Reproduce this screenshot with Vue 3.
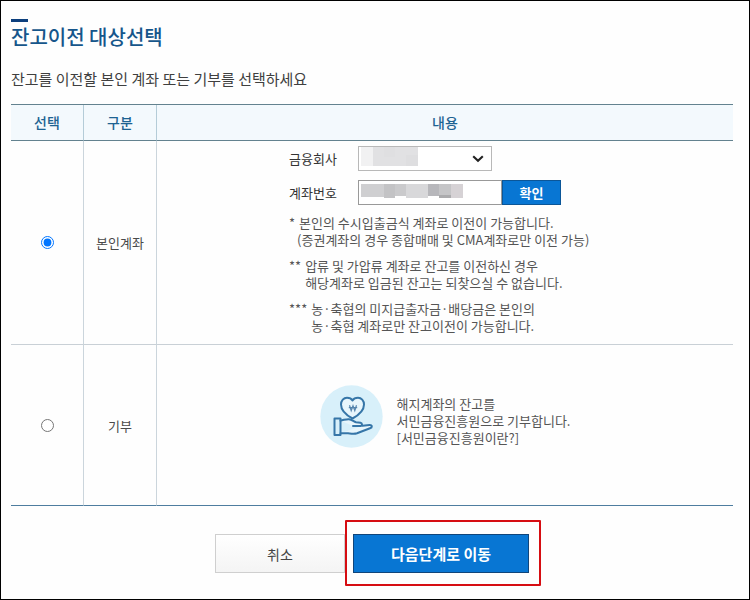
<script setup>
import { ref } from 'vue'

const target = ref('own')
const bank = ref('')
const account = ref('')

const notes = [
  { mark: '*', lines: ['본인의 수시입출금식 계좌로 이전이 가능합니다.', '(증권계좌의 경우 종합매매 및 CMA계좌로만 이전 가능)'] },
  { mark: '**', lines: ['압류 및 가압류 계좌로 잔고를 이전하신 경우', '해당계좌로 입금된 잔고는 되찾으실 수 없습니다.'] },
  { mark: '***', lines: ['농·축협의 미지급출자금·배당금은 본인의', '농·축협 계좌로만 잔고이전이 가능합니다.'] },
]
</script>

<template>
  <main class="page">
    <h1 class="title">잔고이전 대상선택</h1>
    <p class="lead">잔고를 이전할 본인 계좌 또는 기부를 선택하세요</p>

    <table class="choices">
      <colgroup>
        <col class="col-narrow" />
        <col class="col-narrow" />
        <col />
      </colgroup>
      <thead>
        <tr>
          <th scope="col">선택</th>
          <th scope="col">구분</th>
          <th scope="col">내용</th>
        </tr>
      </thead>
      <tbody>
        <tr>
          <td><input id="target-own" v-model="target" class="radio" type="radio" name="target" value="own" /></td>
          <td><label for="target-own">본인계좌</label></td>
          <td class="content">
            <div class="account">
              <div class="field">
                <label class="field-label" for="bank">금융회사</label>
                <div class="control select-box">
                  <select id="bank" v-model="bank"><option value=""></option></select>
                  <svg class="mask" width="62" height="22" viewBox="0 0 62 22" aria-hidden="true">
                    <rect x="3" y="1" width="12" height="19" fill="#f1f1f2" />
                    <rect x="15" y="1" width="45" height="19" fill="#e1e1e3" />
                    <rect x="26" y="1" width="11" height="10" fill="#dfdfe1" />
                    <rect x="48" y="9" width="12" height="11" fill="#dedee0" />
                  </svg>
                  <svg class="chevron" width="12" height="8" viewBox="0 0 12 8" aria-hidden="true">
                    <path d="M1.2 1.2L6 5.8L10.8 1.2" fill="none" stroke="#222" stroke-width="2.1" />
                  </svg>
                </div>
              </div>
              <div class="field">
                <label class="field-label" for="account">계좌번호</label>
                <div class="control">
                  <input id="account" v-model="account" class="text" type="text" />
                  <svg class="mask" width="106" height="22" viewBox="0 0 106 22" aria-hidden="true">
                    <rect x="3" y="4" width="23" height="13" fill="#cfcfd1" />
                    <rect x="26" y="4" width="11" height="14" fill="#c3c3c5" />
                    <rect x="37" y="4" width="11" height="12" fill="#cacacc" />
                    <rect x="48" y="4" width="22" height="14" fill="#d8d8da" />
                    <rect x="70" y="4" width="11" height="12" fill="#b7b7bb" />
                    <rect x="81" y="4" width="12" height="12" fill="#c5c5c7" />
                    <rect x="81" y="15" width="12" height="3" fill="#ababad" />
                    <rect x="93" y="4" width="12" height="14" fill="#d6d2d5" />
                  </svg>
                </div>
                <button class="confirm" type="button">확인</button>
              </div>
              <ul class="notes">
                <li v-for="note in notes" :key="note.mark">
                  <span>{{ note.mark }}</span>
                  <div>
                    <p v-for="line in note.lines" :key="line">{{ line }}</p>
                  </div>
                </li>
              </ul>
            </div>
          </td>
        </tr>
        <tr>
          <td><input id="target-donate" v-model="target" class="radio" type="radio" name="target" value="donate" /></td>
          <td><label for="target-donate">기부</label></td>
          <td class="content donate-cell">
            <div class="donate">
              <svg width="63" height="63" viewBox="0 0 63 63" aria-hidden="true">
                <circle cx="31.5" cy="31.5" r="31.2" fill="#d8f0fa" />
                <g fill="none" stroke="#3676a8" stroke-width="2" stroke-linejoin="round" stroke-linecap="round">
                  <path fill="#e8f6fc" d="M32.500 33.500C27 30.500 21 26 21 19.500C21 15.500 23.700 12.700 27 12.700C29.500 12.700 31.500 13.800 32.500 15.500C33.500 13.800 35.500 12.700 38 12.700C41.300 12.700 44 15.500 44 19.500C44 26 38 30.500 32.500 33.500Z" />
                  <path d="M14.500 33.500H20.500V50H14.500Z" />
                  <path fill="#e8f6fc" d="M20.500 35.500C24 35 26 34 29 34.200C32 34.500 33.500 36.500 36 37.200L40.500 37.800C42.500 38.300 42.500 40.800 40.500 41H33M42.500 40.800L49.500 40C52.500 39.700 52.500 42.500 50 43.200L37 48.200C34 49.200 31 48.500 28 48.200H20.500" />
                </g>
                <path d="M29.500 20.300L31.200 25.700L33 20.800L34.800 25.700L36.500 20.300M28.800 22.700H37.200" fill="none" stroke="#5685ad" stroke-width="1.200" />
              </svg>
              <div class="donate-text">
                <p>해지계좌의 잔고를</p>
                <p>서민금융진흥원으로 기부합니다.</p>
                <p><a href="#about">[서민금융진흥원이란?]</a></p>
              </div>
            </div>
          </td>
        </tr>
      </tbody>
    </table>

    <div class="actions">
      <button class="cancel" type="button">취소</button>
      <div class="spotlight">
        <button class="next" type="button">다음단계로 이동</button>
      </div>
    </div>
  </main>
</template>

<style>
body {
  margin: 0;
  background: #fff;
}
</style>

<style scoped>
.page {
  box-sizing: border-box;
  min-height: 100vh;
  padding: 18px 16px 24px 10px;
  border: 1px solid #000;
  background: #fefefe;
  color: #4a4a4a;
  font-family: "Noto Sans CJK KR", "Noto Sans", sans-serif;
  font-size: 13px;
  line-height: 17px;
}
p {
  margin: 0;
}
button,
input,
select {
  box-sizing: border-box;
  margin: 0;
  padding: 0;
  border-radius: 0;
  font-family: inherit;
}
.title {
  margin: 0;
  color: #16568b;
  font-size: 20px;
  font-weight: 500;
  line-height: 30px;
}
.title::before {
  content: "";
  display: block;
  width: 17px;
  height: 3px;
  background: #0c3f7d;
}
.lead {
  margin: 16px 0 14px;
  color: #3f3f3f;
  font-size: 15px;
  line-height: 22px;
}
.choices {
  width: 100%;
  table-layout: fixed;
  border-collapse: separate;
  border-spacing: 0;
  border-top: 1px solid #63828f;
}
.col-narrow {
  width: 73px;
}
th {
  height: 35px;
  padding: 0;
  border-right: 1px solid #b4ccd8;
  border-bottom: 1px solid #63828f;
  background: #f3f9fd;
  color: #1d6392;
  font-size: 14px;
  font-weight: 500;
}
td {
  padding: 0;
  border-right: 1px solid #cbd5dc;
  border-bottom: 1px solid #c9d0d6;
  text-align: center;
  vertical-align: middle;
}
th:last-child,
td:last-child {
  border-right: 0;
}
tbody tr:last-child td {
  border-bottom-color: #4e7d9f;
}
.content {
  padding: 5px 0 10px;
}
.radio {
  display: block;
  width: 13px;
  height: 13px;
  margin: 0 auto;
  accent-color: #0075ff;
}
.account {
  width: 312px;
  margin: 0 auto;
  text-align: left;
}
.field {
  display: flex;
  align-items: center;
  margin-bottom: 9px;
}
.field-label {
  width: 69px;
  color: #333;
}
.control {
  position: relative;
  width: 144px;
  height: 25px;
}
.select-box {
  width: 134px;
}
.control select,
.text {
  display: block;
  width: 100%;
  height: 100%;
  border: 1px solid #b8b8b8;
  background: #fff;
  appearance: none;
}
.text {
  border-color: #999;
}
.mask {
  position: absolute;
  top: 0;
  left: 0;
  pointer-events: none;
}
.chevron {
  position: absolute;
  top: 9px;
  right: 8px;
  pointer-events: none;
}
.confirm {
  width: 59px;
  height: 25px;
  border: 1px solid #0b5698;
  background: #0876d3;
  color: #fff;
  font-size: 13px;
  font-weight: 700;
  line-height: 17px;
}
.notes {
  display: grid;
  gap: 9px;
  margin: 0;
  padding: 0;
  color: #555;
  list-style: none;
  white-space: nowrap;
}
.notes li {
  display: flex;
  gap: 4px;
}
.notes li:first-child p:last-child {
  margin-left: -2px;
}
.donate-cell {
  height: 124px;
  padding: 9px 0 27px;
}
.donate {
  display: flex;
  justify-content: center;
  gap: 14px;
}
.donate-text {
  padding-top: 10px;
  color: #555;
  text-align: left;
}
.donate-text a {
  color: inherit;
  text-decoration: none;
}
.actions {
  display: flex;
  justify-content: center;
  gap: 8px;
  margin-top: 28px;
}
.cancel,
.next {
  display: block;
  height: 39px;
}
.cancel {
  width: 130px;
  border: 1px solid #cfcfcf;
  background: linear-gradient(#fff, #f4f4f4);
  color: #444;
  font-size: 14px;
}
.next {
  width: 176px;
  border: 1px solid #10457a;
  background: #0876d3;
  color: #fff;
  font-size: 15px;
  font-weight: 700;
}
.spotlight {
  position: relative;
}
.spotlight::after {
  content: "";
  position: absolute;
  inset: -14px -12px -13px -8px;
  border: 2px solid #d60d12;
  border-radius: 1px;
  pointer-events: none;
}
</style>
